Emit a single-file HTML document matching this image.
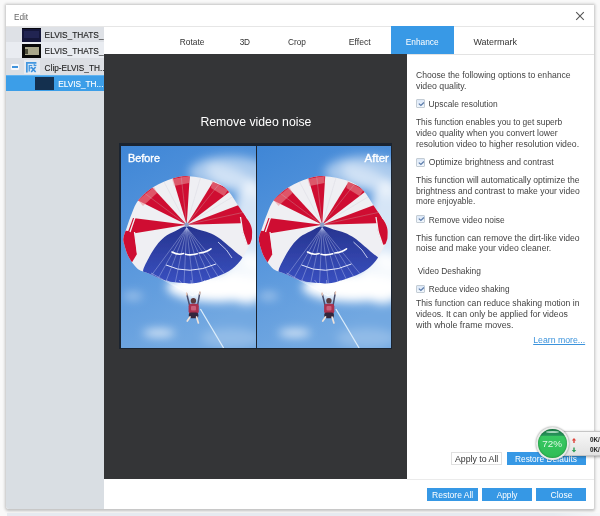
<!DOCTYPE html>
<html><head><meta charset="utf-8"><title>Edit</title>
<style>
*{box-sizing:border-box;margin:0;padding:0}
html,body{width:600px;height:516px;overflow:hidden;background:#f9f9f9;font-family:"Liberation Sans",sans-serif;font-size:8px;color:#333}
.abs{position:absolute}
.t{position:absolute;white-space:nowrap;line-height:12px;height:12px}
#win{left:6px;top:5px;width:588px;height:504px;background:#fff;box-shadow:0 .5px 3px 1px rgba(0,0,0,.23);border-radius:0 0 1px 3px}
#below{left:7px;top:513.4px;width:594px;height:3px;background:linear-gradient(to right,#e6eaf0 0,#e6eaf0 92%,#f6f7f9 100%)}
#tline{left:6px;top:26px;width:588px;height:1px;background:#e6e6e6}
#left{left:6px;top:27px;width:98px;height:482px;background:#d9dee3;border-bottom-left-radius:3px}
#bline{left:407px;top:479px;width:187px;height:1px;background:#ebebeb}
.row{left:6px;width:98px}
#tabs{left:104px;top:27px;width:490px;height:27px;background:#fff}
#tabline{left:104px;top:54px;width:490px;height:1px;background:#e3e3e3}
#entab{left:391px;top:26px;width:63px;height:28px;background:#3899e6}
#dark{left:104px;top:54px;width:303px;height:425px;background:#343537}
#frame{left:119px;top:143.4px;width:273.4px;height:205.6px;background:#1b2430}
.cb{width:8.5px;height:8.5px;border:1px solid #c3ccd4;background:linear-gradient(#dce8f8,#f2f7fc);line-height:0;border-radius:1px}
.cb svg{position:absolute;left:-0.5px;top:-0.5px}
.btn{background:#3698e5}
#clip{left:0;top:0;width:104px;height:516px;overflow:hidden}
#txt{left:0;top:0;width:600px;height:516px;will-change:transform}
</style></head><body>
<div class="abs" id="win"></div>
<div class="abs" id="below"></div>
<div class="abs" id="tline"></div>
<div class="abs" id="left"></div>
<div class="abs row" style="top:27px;height:15px;background:#dee1e6"></div>
<div class="abs row" style="top:42px;height:16.4px;background:#e9ecf1"></div>
<div class="abs row" style="top:58.4px;height:16.6px;background:#dcdfe4"></div>
<div class="abs row" style="top:74.8px;height:16.4px;background:#3c9ee8;border-top:1px solid #62b3ef"></div>
<div class="abs" style="left:21.8px;top:27.7px;width:19px;height:14px;background:#15173a;border-top:1.5px solid #08080f"></div>
<div class="abs" style="left:23.5px;top:31px;width:15px;height:7px;background:#2a2d62;opacity:.6;filter:blur(.7px)"></div>
<div class="abs" style="left:21.8px;top:44px;width:19px;height:14px;background:#090909"></div>
<div class="abs" style="left:24.8px;top:47px;width:14.4px;height:7.5px;background:#aaa88b;filter:blur(.4px)"></div>
<div class="abs" style="left:25.4px;top:48.5px;width:3px;height:5px;background:#4a4a38;filter:blur(.4px)"></div>
<div class="abs" style="left:24.4px;top:60px;width:16px;height:13.5px;background:#e7ebf1"></div>
<div class="abs" style="left:11.3px;top:63.6px;width:7.4px;height:6.8px;background:#f7f9fc;border-radius:1.2px"></div>
<div class="abs" style="left:12.4px;top:66px;width:5.2px;height:1.9px;background:#3f93dc"></div>
<svg class="abs" style="left:26px;top:62px" width="10.6" height="10.8" viewBox="0 0 10.6 10.8"><rect x="0" y="0" width="10.4" height="10.6" fill="#dbe9f7"/><path d="M0 0 H10.4 V1.7 H1.7 V10.6 H0Z" fill="#4397df"/><path d="M2.6 2.9 H6.2 V4.1 H3.9 V5.4 H5.6 V6.5 H3.9 V9.6 H2.6Z" fill="#4397df"/><path d="M5.2 4.9 L9.6 9.9 M9.6 4.9 L5.2 9.9" stroke="#3a8fdb" stroke-width="1.5"/><path d="M8.2 1.7 V3.4 H10.4" stroke="#4397df" stroke-width="1.1" fill="none"/></svg>
<div class="abs" style="left:35.4px;top:76.8px;width:18.6px;height:13.6px;background:#14304f"></div>
<div class="abs" id="tabs"></div>
<div class="abs" id="tabline"></div>
<div class="abs" id="entab"></div>
<div class="abs" id="dark"></div>
<div class="abs" id="bline"></div>
<div class="abs" id="frame"></div>
<svg class="abs" style="left:121px;top:145.5px" width="135.2" height="202" viewBox="0 0 135.2 202">
<defs>
<linearGradient id="skya" x1="0" y1="0" x2="0.35" y2="1"><stop offset="0" stop-color="#3f86d6"/><stop offset="0.5" stop-color="#5796dc"/><stop offset="1" stop-color="#72a8e1"/></linearGradient>
<linearGradient id="blua" x1="0" y1="0" x2="0" y2="1"><stop offset="0" stop-color="#27348f"/><stop offset="1" stop-color="#3a52c4"/></linearGradient>
<filter id="bla" x="-20%" y="-20%" width="140%" height="140%"><feGaussianBlur stdDeviation="5"/></filter>
<filter id="bsa"><feGaussianBlur stdDeviation="0.45"/></filter>
<clipPath id="cpa"><path d="M2.7 90.8 C3.1 88.7 3.6 87.7 5.0 83.8 C6.4 79.9 8.7 72.5 10.8 67.5 C12.9 62.5 14.1 58.0 17.8 53.5 C21.5 49.0 27.3 44.2 33.0 40.7 C38.6 37.2 45.9 34.2 51.7 32.5 C57.5 30.8 61.4 29.8 68.0 30.2 C74.6 30.6 84.9 32.5 91.3 34.8 C97.7 37.1 101.8 39.5 106.5 44.2 C111.2 48.9 115.4 57.0 119.3 62.8 C123.2 68.6 127.9 74.5 129.8 79.2 C131.8 83.9 131.0 88.0 131.0 90.8 C131.0 93.6 130.4 94.3 129.8 96.0 C129.2 97.7 129.2 97.7 127.5 100.8 C125.8 103.9 122.6 110.7 119.3 114.8 C116.0 118.9 112.4 122.4 107.7 125.3 C103.0 128.2 96.8 130.4 91.3 132.3 C85.8 134.2 79.8 136.2 75.0 137.0 C70.2 137.8 67.2 137.4 62.2 137.0 C57.2 136.6 50.4 136.2 44.7 134.7 C39.1 133.1 32.2 129.3 28.3 127.7 C24.4 126.1 23.4 126.3 21.3 125.3 C19.2 124.3 17.8 124.3 15.5 121.8 C13.2 119.3 9.4 114.5 7.3 110.2 C5.2 105.9 3.5 99.4 2.7 96.2 C1.9 93.0 2.3 92.9 2.7 90.8Z"/></clipPath>
<clipPath id="fra"><rect x="0" y="0" width="136" height="202"/></clipPath>
</defs>
<g clip-path="url(#fra)">
<rect x="0" y="0" width="136" height="202" fill="url(#skya)"/>
<g filter="url(#bla)" fill="#fff">
<ellipse cx="108" cy="26" rx="40" ry="16" opacity="0.5"/>
<ellipse cx="112" cy="34" rx="30" ry="11" opacity="0.45" transform="rotate(28 112 34)"/>
<ellipse cx="132" cy="80" rx="20" ry="46" opacity="0.75"/>
<ellipse cx="96" cy="141" rx="50" ry="15" opacity="1"/>
<ellipse cx="106" cy="140" rx="38" ry="11" opacity="1"/>
<ellipse cx="126" cy="132" rx="24" ry="26" opacity="0.9"/>
<ellipse cx="38" cy="187" rx="16" ry="4" opacity="0.75"/>
<ellipse cx="110" cy="192" rx="30" ry="10" opacity="0.22"/>
<ellipse cx="12" cy="150" rx="10" ry="4" opacity="0.4"/>
</g>
<g filter="url(#bsa)">
<path d="M2.7 90.8 C3.1 88.7 3.6 87.7 5.0 83.8 C6.4 79.9 8.7 72.5 10.8 67.5 C12.9 62.5 14.1 58.0 17.8 53.5 C21.5 49.0 27.3 44.2 33.0 40.7 C38.6 37.2 45.9 34.2 51.7 32.5 C57.5 30.8 61.4 29.8 68.0 30.2 C74.6 30.6 84.9 32.5 91.3 34.8 C97.7 37.1 101.8 39.5 106.5 44.2 C111.2 48.9 115.4 57.0 119.3 62.8 C123.2 68.6 127.9 74.5 129.8 79.2 C131.8 83.9 131.0 88.0 131.0 90.8 C131.0 93.6 130.4 94.3 129.8 96.0 C129.2 97.7 129.2 97.7 127.5 100.8 C125.8 103.9 122.6 110.7 119.3 114.8 C116.0 118.9 112.4 122.4 107.7 125.3 C103.0 128.2 96.8 130.4 91.3 132.3 C85.8 134.2 79.8 136.2 75.0 137.0 C70.2 137.8 67.2 137.4 62.2 137.0 C57.2 136.6 50.4 136.2 44.7 134.7 C39.1 133.1 32.2 129.3 28.3 127.7 C24.4 126.1 23.4 126.3 21.3 125.3 C19.2 124.3 17.8 124.3 15.5 121.8 C13.2 119.3 9.4 114.5 7.3 110.2 C5.2 105.9 3.5 99.4 2.7 96.2 C1.9 93.0 2.3 92.9 2.7 90.8Z" fill="#efeff3"/>
<g clip-path="url(#cpa)">
<path d="M65.7 78.7 L12.0 72.0 L6.0 88.5 Z" fill="#cf1030"/>
<path d="M65.7 78.7 L12.0 52.0 L30.0 40.0 Z" fill="#cf1030"/>
<path d="M65.7 78.7 L50.5 28.0 L69.0 26.0 Z" fill="#cf1030"/>
<path d="M65.7 78.7 L92.0 36.0 L111.0 44.0 Z" fill="#cf1030"/>
<path d="M65.7 78.7 L119.0 58.5 L128.0 77.0 Z" fill="#cf1030"/>
<path d="M0 84 L13.5 86 L16 108 L10 118 L0 110Z" fill="#cf1030"/>
<path d="M120 71 L134 76 L134 97 L126 99 L121.5 86Z" fill="#cf1030"/>
<path d="M14.5 70 L9 86 M16.5 108 L13.5 86 M119.5 71 L121.8 86 L126.5 100" stroke="#efeff3" stroke-width="1.3" fill="none"/>
<path d="M17 54 L33 41 L36 47 L22 60Z" fill="#ec8e96" opacity="0.55"/>
<path d="M51 33 L68 30 L68 37 L53 40Z" fill="#e9a0a6" opacity="0.5"/>
<path d="M91 35 L107 44 L103 50 L90 42Z" fill="#ec9aa0" opacity="0.5"/>
<path d="M65.7 78.7 L22 46" stroke="#c9c9d6" stroke-width="0.4" opacity="0.7"/>
<path d="M65.7 78.7 L42 34" stroke="#c9c9d6" stroke-width="0.4" opacity="0.7"/>
<path d="M65.7 78.7 L60 29" stroke="#c9c9d6" stroke-width="0.4" opacity="0.7"/>
<path d="M65.7 78.7 L80 30" stroke="#c9c9d6" stroke-width="0.4" opacity="0.7"/>
<path d="M65.7 78.7 L99 37" stroke="#c9c9d6" stroke-width="0.4" opacity="0.7"/>
<path d="M65.7 78.7 L113 50" stroke="#c9c9d6" stroke-width="0.4" opacity="0.7"/>
<path d="M65.7 78.7 L124 66" stroke="#c9c9d6" stroke-width="0.4" opacity="0.7"/>
<path d="M65.7 80.0 C61.9 80.3 57.7 83.5 54.0 85.3 C50.3 87.1 46.6 88.6 43.5 91.0 C40.4 93.4 38.0 96.2 35.5 99.5 C33.0 102.8 30.7 106.3 28.5 110.5 C26.3 114.7 22.7 121.2 22.1 124.5 C21.5 127.8 21.2 127.6 25.0 130.0 C28.8 132.4 38.3 137.0 45.0 139.0 C51.7 141.0 58.3 141.8 65.0 142.0 C71.7 142.2 78.3 141.5 85.0 140.0 C91.7 138.5 99.3 135.5 105.0 133.0 C110.7 130.5 115.9 128.1 119.0 125.0 C122.1 121.9 124.3 117.8 123.5 114.5 C122.7 111.2 116.9 108.2 114.0 105.5 C111.1 102.8 108.7 100.8 106.0 98.5 C103.3 96.2 101.0 94.0 98.0 92.0 C95.0 90.0 91.5 88.2 88.0 86.8 C84.5 85.4 80.7 84.7 77.0 83.6 C73.3 82.5 69.5 79.7 65.7 80.0Z" fill="url(#blua)"/>
<path d="M65.7 81.7 L24 138" stroke="#c9d2f4" stroke-width="0.5" opacity="0.75"/>
<path d="M65.7 81.7 L34 138" stroke="#c9d2f4" stroke-width="0.5" opacity="0.75"/>
<path d="M65.7 81.7 L44 138" stroke="#c9d2f4" stroke-width="0.5" opacity="0.75"/>
<path d="M65.7 81.7 L54 138" stroke="#c9d2f4" stroke-width="0.5" opacity="0.75"/>
<path d="M65.7 81.7 L63 138" stroke="#c9d2f4" stroke-width="0.5" opacity="0.75"/>
<path d="M65.7 81.7 L72 138" stroke="#c9d2f4" stroke-width="0.5" opacity="0.75"/>
<path d="M65.7 81.7 L82 138" stroke="#c9d2f4" stroke-width="0.5" opacity="0.75"/>
<path d="M65.7 81.7 L92 138" stroke="#c9d2f4" stroke-width="0.5" opacity="0.75"/>
<path d="M65.7 81.7 L102 138" stroke="#c9d2f4" stroke-width="0.5" opacity="0.75"/>
<path d="M65.7 81.7 L112 138" stroke="#c9d2f4" stroke-width="0.5" opacity="0.75"/>
<path d="M51 106 Q57 109.5 62.6 107.5 M64.6 108.3 Q70 109.6 76.3 107.7 M78.3 107 Q85 106.5 90 102.8" stroke="#fff" stroke-width="1.6" fill="none" stroke-linecap="round"/>
<path d="M45 119 Q68 130 95 118" stroke="#e6eafc" stroke-width="1" fill="none"/>
<path d="M97 96 Q107 104 111 112" stroke="#e6eafc" stroke-width="0.8" fill="none"/>
</g>
<circle cx="65.7" cy="78.7" r="2.3" fill="#8fa0c8"/>
<path d="M30 127 L71.5 150" stroke="#fff" stroke-width="0.45" opacity="0.8"/>
<path d="M45 134 L71.5 150" stroke="#fff" stroke-width="0.45" opacity="0.8"/>
<path d="M58 134 L71.5 150" stroke="#fff" stroke-width="0.45" opacity="0.8"/>
<path d="M70 134 L71.5 150" stroke="#fff" stroke-width="0.45" opacity="0.8"/>
<path d="M84 134 L71.5 150" stroke="#fff" stroke-width="0.45" opacity="0.8"/>
<path d="M98 134 L71.5 150" stroke="#fff" stroke-width="0.45" opacity="0.8"/>
<path d="M110 127 L71.5 150" stroke="#fff" stroke-width="0.45" opacity="0.8"/>
<path d="M79.4 163 L102.6 202" stroke="#dcedfb" stroke-width="1.25"/>
<path d="M68.6 159.5 L65.8 148 M76.6 159.5 L78.8 146.6" stroke="#4a4f6e" stroke-width="1.5" stroke-linecap="round"/>
<path d="M65.8 149 L65.6 147 M78.7 148 L79 146" stroke="#e8c8b8" stroke-width="1.5" stroke-linecap="round"/>
<ellipse cx="72.4" cy="154.8" rx="2.7" ry="2.8" fill="#5a3a3c"/>
<rect x="67.6" y="157.8" width="10.2" height="10" rx="2.4" fill="#a9304f"/>
<rect x="70" y="160" width="5" height="4.5" rx="1" fill="#d06a86" opacity=".8"/>
<rect x="67.8" y="166.6" width="9.6" height="5.6" rx="2.2" fill="#33283c"/>
<path d="M69 171 L66.3 175 M75.6 171 L77.4 177" stroke="#efe2da" stroke-width="1.7" stroke-linecap="round"/>
</g>
</g>
</svg>
<svg class="abs" style="left:257px;top:145.5px" width="134.3" height="202" viewBox="0.5 0 134.3 202">
<defs>
<linearGradient id="skyb" x1="0" y1="0" x2="0.35" y2="1"><stop offset="0" stop-color="#3f86d6"/><stop offset="0.5" stop-color="#5796dc"/><stop offset="1" stop-color="#72a8e1"/></linearGradient>
<linearGradient id="blub" x1="0" y1="0" x2="0" y2="1"><stop offset="0" stop-color="#27348f"/><stop offset="1" stop-color="#3a52c4"/></linearGradient>
<filter id="blb" x="-20%" y="-20%" width="140%" height="140%"><feGaussianBlur stdDeviation="5"/></filter>
<filter id="bsb"><feGaussianBlur stdDeviation="0.45"/></filter>
<clipPath id="cpb"><path d="M2.7 90.8 C3.1 88.7 3.6 87.7 5.0 83.8 C6.4 79.9 8.7 72.5 10.8 67.5 C12.9 62.5 14.1 58.0 17.8 53.5 C21.5 49.0 27.3 44.2 33.0 40.7 C38.6 37.2 45.9 34.2 51.7 32.5 C57.5 30.8 61.4 29.8 68.0 30.2 C74.6 30.6 84.9 32.5 91.3 34.8 C97.7 37.1 101.8 39.5 106.5 44.2 C111.2 48.9 115.4 57.0 119.3 62.8 C123.2 68.6 127.9 74.5 129.8 79.2 C131.8 83.9 131.0 88.0 131.0 90.8 C131.0 93.6 130.4 94.3 129.8 96.0 C129.2 97.7 129.2 97.7 127.5 100.8 C125.8 103.9 122.6 110.7 119.3 114.8 C116.0 118.9 112.4 122.4 107.7 125.3 C103.0 128.2 96.8 130.4 91.3 132.3 C85.8 134.2 79.8 136.2 75.0 137.0 C70.2 137.8 67.2 137.4 62.2 137.0 C57.2 136.6 50.4 136.2 44.7 134.7 C39.1 133.1 32.2 129.3 28.3 127.7 C24.4 126.1 23.4 126.3 21.3 125.3 C19.2 124.3 17.8 124.3 15.5 121.8 C13.2 119.3 9.4 114.5 7.3 110.2 C5.2 105.9 3.5 99.4 2.7 96.2 C1.9 93.0 2.3 92.9 2.7 90.8Z"/></clipPath>
<clipPath id="frb"><rect x="0" y="0" width="136" height="202"/></clipPath>
</defs>
<g clip-path="url(#frb)">
<rect x="0" y="0" width="136" height="202" fill="url(#skyb)"/>
<g filter="url(#blb)" fill="#fff">
<ellipse cx="108" cy="26" rx="40" ry="16" opacity="0.5"/>
<ellipse cx="112" cy="34" rx="30" ry="11" opacity="0.45" transform="rotate(28 112 34)"/>
<ellipse cx="132" cy="80" rx="20" ry="46" opacity="0.75"/>
<ellipse cx="96" cy="141" rx="50" ry="15" opacity="1"/>
<ellipse cx="106" cy="140" rx="38" ry="11" opacity="1"/>
<ellipse cx="126" cy="132" rx="24" ry="26" opacity="0.9"/>
<ellipse cx="38" cy="187" rx="16" ry="4" opacity="0.75"/>
<ellipse cx="110" cy="192" rx="30" ry="10" opacity="0.22"/>
<ellipse cx="12" cy="150" rx="10" ry="4" opacity="0.4"/>
</g>
<g filter="url(#bsb)">
<path d="M2.7 90.8 C3.1 88.7 3.6 87.7 5.0 83.8 C6.4 79.9 8.7 72.5 10.8 67.5 C12.9 62.5 14.1 58.0 17.8 53.5 C21.5 49.0 27.3 44.2 33.0 40.7 C38.6 37.2 45.9 34.2 51.7 32.5 C57.5 30.8 61.4 29.8 68.0 30.2 C74.6 30.6 84.9 32.5 91.3 34.8 C97.7 37.1 101.8 39.5 106.5 44.2 C111.2 48.9 115.4 57.0 119.3 62.8 C123.2 68.6 127.9 74.5 129.8 79.2 C131.8 83.9 131.0 88.0 131.0 90.8 C131.0 93.6 130.4 94.3 129.8 96.0 C129.2 97.7 129.2 97.7 127.5 100.8 C125.8 103.9 122.6 110.7 119.3 114.8 C116.0 118.9 112.4 122.4 107.7 125.3 C103.0 128.2 96.8 130.4 91.3 132.3 C85.8 134.2 79.8 136.2 75.0 137.0 C70.2 137.8 67.2 137.4 62.2 137.0 C57.2 136.6 50.4 136.2 44.7 134.7 C39.1 133.1 32.2 129.3 28.3 127.7 C24.4 126.1 23.4 126.3 21.3 125.3 C19.2 124.3 17.8 124.3 15.5 121.8 C13.2 119.3 9.4 114.5 7.3 110.2 C5.2 105.9 3.5 99.4 2.7 96.2 C1.9 93.0 2.3 92.9 2.7 90.8Z" fill="#efeff3"/>
<g clip-path="url(#cpb)">
<path d="M65.7 78.7 L12.0 72.0 L6.0 88.5 Z" fill="#cf1030"/>
<path d="M65.7 78.7 L12.0 52.0 L30.0 40.0 Z" fill="#cf1030"/>
<path d="M65.7 78.7 L50.5 28.0 L69.0 26.0 Z" fill="#cf1030"/>
<path d="M65.7 78.7 L92.0 36.0 L111.0 44.0 Z" fill="#cf1030"/>
<path d="M65.7 78.7 L119.0 58.5 L128.0 77.0 Z" fill="#cf1030"/>
<path d="M0 84 L13.5 86 L16 108 L10 118 L0 110Z" fill="#cf1030"/>
<path d="M120 71 L134 76 L134 97 L126 99 L121.5 86Z" fill="#cf1030"/>
<path d="M14.5 70 L9 86 M16.5 108 L13.5 86 M119.5 71 L121.8 86 L126.5 100" stroke="#efeff3" stroke-width="1.3" fill="none"/>
<path d="M17 54 L33 41 L36 47 L22 60Z" fill="#ec8e96" opacity="0.55"/>
<path d="M51 33 L68 30 L68 37 L53 40Z" fill="#e9a0a6" opacity="0.5"/>
<path d="M91 35 L107 44 L103 50 L90 42Z" fill="#ec9aa0" opacity="0.5"/>
<path d="M65.7 78.7 L22 46" stroke="#c9c9d6" stroke-width="0.4" opacity="0.7"/>
<path d="M65.7 78.7 L42 34" stroke="#c9c9d6" stroke-width="0.4" opacity="0.7"/>
<path d="M65.7 78.7 L60 29" stroke="#c9c9d6" stroke-width="0.4" opacity="0.7"/>
<path d="M65.7 78.7 L80 30" stroke="#c9c9d6" stroke-width="0.4" opacity="0.7"/>
<path d="M65.7 78.7 L99 37" stroke="#c9c9d6" stroke-width="0.4" opacity="0.7"/>
<path d="M65.7 78.7 L113 50" stroke="#c9c9d6" stroke-width="0.4" opacity="0.7"/>
<path d="M65.7 78.7 L124 66" stroke="#c9c9d6" stroke-width="0.4" opacity="0.7"/>
<path d="M65.7 80.0 C61.9 80.3 57.7 83.5 54.0 85.3 C50.3 87.1 46.6 88.6 43.5 91.0 C40.4 93.4 38.0 96.2 35.5 99.5 C33.0 102.8 30.7 106.3 28.5 110.5 C26.3 114.7 22.7 121.2 22.1 124.5 C21.5 127.8 21.2 127.6 25.0 130.0 C28.8 132.4 38.3 137.0 45.0 139.0 C51.7 141.0 58.3 141.8 65.0 142.0 C71.7 142.2 78.3 141.5 85.0 140.0 C91.7 138.5 99.3 135.5 105.0 133.0 C110.7 130.5 115.9 128.1 119.0 125.0 C122.1 121.9 124.3 117.8 123.5 114.5 C122.7 111.2 116.9 108.2 114.0 105.5 C111.1 102.8 108.7 100.8 106.0 98.5 C103.3 96.2 101.0 94.0 98.0 92.0 C95.0 90.0 91.5 88.2 88.0 86.8 C84.5 85.4 80.7 84.7 77.0 83.6 C73.3 82.5 69.5 79.7 65.7 80.0Z" fill="url(#blub)"/>
<path d="M65.7 81.7 L24 138" stroke="#c9d2f4" stroke-width="0.5" opacity="0.75"/>
<path d="M65.7 81.7 L34 138" stroke="#c9d2f4" stroke-width="0.5" opacity="0.75"/>
<path d="M65.7 81.7 L44 138" stroke="#c9d2f4" stroke-width="0.5" opacity="0.75"/>
<path d="M65.7 81.7 L54 138" stroke="#c9d2f4" stroke-width="0.5" opacity="0.75"/>
<path d="M65.7 81.7 L63 138" stroke="#c9d2f4" stroke-width="0.5" opacity="0.75"/>
<path d="M65.7 81.7 L72 138" stroke="#c9d2f4" stroke-width="0.5" opacity="0.75"/>
<path d="M65.7 81.7 L82 138" stroke="#c9d2f4" stroke-width="0.5" opacity="0.75"/>
<path d="M65.7 81.7 L92 138" stroke="#c9d2f4" stroke-width="0.5" opacity="0.75"/>
<path d="M65.7 81.7 L102 138" stroke="#c9d2f4" stroke-width="0.5" opacity="0.75"/>
<path d="M65.7 81.7 L112 138" stroke="#c9d2f4" stroke-width="0.5" opacity="0.75"/>
<path d="M51 106 Q57 109.5 62.6 107.5 M64.6 108.3 Q70 109.6 76.3 107.7 M78.3 107 Q85 106.5 90 102.8" stroke="#fff" stroke-width="1.6" fill="none" stroke-linecap="round"/>
<path d="M45 119 Q68 130 95 118" stroke="#e6eafc" stroke-width="1" fill="none"/>
<path d="M97 96 Q107 104 111 112" stroke="#e6eafc" stroke-width="0.8" fill="none"/>
</g>
<circle cx="65.7" cy="78.7" r="2.3" fill="#8fa0c8"/>
<path d="M30 127 L71.5 150" stroke="#fff" stroke-width="0.45" opacity="0.8"/>
<path d="M45 134 L71.5 150" stroke="#fff" stroke-width="0.45" opacity="0.8"/>
<path d="M58 134 L71.5 150" stroke="#fff" stroke-width="0.45" opacity="0.8"/>
<path d="M70 134 L71.5 150" stroke="#fff" stroke-width="0.45" opacity="0.8"/>
<path d="M84 134 L71.5 150" stroke="#fff" stroke-width="0.45" opacity="0.8"/>
<path d="M98 134 L71.5 150" stroke="#fff" stroke-width="0.45" opacity="0.8"/>
<path d="M110 127 L71.5 150" stroke="#fff" stroke-width="0.45" opacity="0.8"/>
<path d="M79.4 163 L102.6 202" stroke="#dcedfb" stroke-width="1.25"/>
<path d="M68.6 159.5 L65.8 148 M76.6 159.5 L78.8 146.6" stroke="#4a4f6e" stroke-width="1.5" stroke-linecap="round"/>
<path d="M65.8 149 L65.6 147 M78.7 148 L79 146" stroke="#e8c8b8" stroke-width="1.5" stroke-linecap="round"/>
<ellipse cx="72.4" cy="154.8" rx="2.7" ry="2.8" fill="#5a3a3c"/>
<rect x="67.6" y="157.8" width="10.2" height="10" rx="2.4" fill="#a9304f"/>
<rect x="70" y="160" width="5" height="4.5" rx="1" fill="#d06a86" opacity=".8"/>
<rect x="67.8" y="166.6" width="9.6" height="5.6" rx="2.2" fill="#33283c"/>
<path d="M69 171 L66.3 175 M75.6 171 L77.4 177" stroke="#efe2da" stroke-width="1.7" stroke-linecap="round"/>
</g>
</g>
</svg>
<div class="abs cb" style="left:416.2px;top:99.0px"><svg width="8" height="8" viewBox="0 0 8 8"><path d="M1.8 3.6 L3.9 5.5 L6.9 2.5" stroke="#5b7cab" stroke-width="1.25" fill="none"/></svg></div>
<div class="abs cb" style="left:416.2px;top:158.0px"><svg width="8" height="8" viewBox="0 0 8 8"><path d="M1.8 3.6 L3.9 5.5 L6.9 2.5" stroke="#5b7cab" stroke-width="1.25" fill="none"/></svg></div>
<div class="abs cb" style="left:416.2px;top:214.8px"><svg width="8" height="8" viewBox="0 0 8 8"><path d="M1.8 3.6 L3.9 5.5 L6.9 2.5" stroke="#5b7cab" stroke-width="1.25" fill="none"/></svg></div>
<div class="abs cb" style="left:416.2px;top:284.6px"><svg width="8" height="8" viewBox="0 0 8 8"><path d="M1.8 3.6 L3.9 5.5 L6.9 2.5" stroke="#5b7cab" stroke-width="1.25" fill="none"/></svg></div>
<svg class="abs" style="left:575px;top:11px" width="10" height="10" viewBox="0 0 10 10"><path d="M1.2 1.2 L8.8 8.8 M8.8 1.2 L1.2 8.8" stroke="#555" stroke-width="1.1" fill="none"/></svg>
<div class="abs" style="left:451px;top:451.5px;width:51px;height:13.5px;background:#fff;border:1px solid #e0e0e0"></div>
<div class="abs btn" style="left:507px;top:451.5px;width:79px;height:13.5px"></div>
<div class="abs btn" style="left:427px;top:488px;width:51px;height:13px"></div>
<div class="abs btn" style="left:482px;top:488px;width:50px;height:13px"></div>
<div class="abs btn" style="left:536px;top:488px;width:50px;height:13px"></div>
<div class="abs" id="txt">
<div class="abs" id="clip">
<span class="t" style="left:44.6px;top:29px;font-size:8.34px;color:#1c1c1c;-webkit-text-stroke:.12px #1c1c1c">ELVIS_THATS_</span>
<span class="t" style="left:44.6px;top:45px;font-size:8.34px;color:#1c1c1c;-webkit-text-stroke:.12px #1c1c1c">ELVIS_THATS_</span>
<span class="t" style="left:44.6px;top:63px;font-size:8.25px;color:#1c1c1c;-webkit-text-stroke:.12px #1c1c1c">Clip-ELVIS_TH...</span>
<span class="t" style="left:58.2px;top:79px;font-size:8.26px;color:#ffffff;-webkit-text-stroke:.12px #ffffff">ELVIS_TH...</span>
</div>
<span class="t" style="left:14.0px;top:12px;font-size:8.25px;color:#666;letter-spacing:-0.055px">Edit</span>
<span class="t" style="left:179.8px;top:36px;font-size:8.35px;color:#333">Rotate</span>
<span class="t" style="left:239.7px;top:37px;font-size:8.25px;color:#333;letter-spacing:-0.275px">3D</span>
<span class="t" style="left:288.0px;top:36px;font-size:8.30px;color:#333">Crop</span>
<span class="t" style="left:348.8px;top:36px;font-size:8.66px;color:#333">Effect</span>
<span class="t" style="left:405.7px;top:36px;font-size:8.36px;color:#fff">Enhance</span>
<span class="t" style="left:473.5px;top:36px;font-size:8.96px;color:#333">Watermark</span>
<span class="t" style="left:200.4px;top:116px;font-size:12.26px;color:#fff">Remove video noise</span>
<span class="t" style="left:128.0px;top:152px;font-size:10.86px;color:#fff;-webkit-text-stroke:.35px #fff">Before</span>
<span class="t" style="left:364.6px;top:152px;font-size:11.50px;color:#fff;-webkit-text-stroke:.35px #fff">After</span>
<span class="t" style="left:416.0px;top:69px;font-size:8.58px;color:#444">Choose the following options to enhance</span>
<span class="t" style="left:416.0px;top:80px;font-size:8.76px;color:#444">video quality.</span>
<span class="t" style="left:428.5px;top:98px;font-size:8.42px;color:#444">Upscale resolution</span>
<span class="t" style="left:416.0px;top:116px;font-size:8.39px;color:#444">This function enables you to get superb</span>
<span class="t" style="left:416.0px;top:127px;font-size:8.69px;color:#444">video quality when you convert lower</span>
<span class="t" style="left:416.0px;top:138px;font-size:8.71px;color:#444">resolution video to higher resolution video.</span>
<span class="t" style="left:428.8px;top:156px;font-size:8.55px;color:#444">Optimize brightness and contrast</span>
<span class="t" style="left:416.0px;top:174px;font-size:8.55px;color:#444">This function will automatically optimize the</span>
<span class="t" style="left:416.0px;top:185px;font-size:8.57px;color:#444">brightness and contrast to make your video</span>
<span class="t" style="left:416.0px;top:195px;font-size:8.33px;color:#444">more enjoyable.</span>
<span class="t" style="left:428.8px;top:214px;font-size:8.38px;color:#444">Remove video noise</span>
<span class="t" style="left:416.0px;top:232px;font-size:8.62px;color:#444">This function can remove the dirt-like video</span>
<span class="t" style="left:416.0px;top:242px;font-size:8.60px;color:#444">noise and make your video cleaner.</span>
<span class="t" style="left:417.7px;top:265px;font-size:8.39px;color:#444">Video Deshaking</span>
<span class="t" style="left:428.8px;top:284px;font-size:8.25px;color:#444;letter-spacing:-0.024px">Reduce video shaking</span>
<span class="t" style="left:416.0px;top:297px;font-size:8.65px;color:#444">This function can reduce shaking motion in</span>
<span class="t" style="left:416.0px;top:308px;font-size:8.68px;color:#444">videos. It can only be applied for videos</span>
<span class="t" style="left:416.0px;top:319px;font-size:8.87px;color:#444">with whole frame moves.</span>
<span class="t" style="left:533.2px;top:334px;font-size:8.74px;color:#3b93dc;text-decoration:underline">Learn more...</span>
<span class="t" style="left:455.0px;top:453px;font-size:8.75px;color:#333">Apply to All</span>
<span class="t" style="left:515.0px;top:453px;font-size:8.32px;color:#fff">Restore Defaults</span>
<span class="t" style="left:432.0px;top:489px;font-size:8.54px;color:#fff">Restore All</span>
<span class="t" style="left:496.7px;top:489px;font-size:8.31px;color:#fff">Apply</span>
<span class="t" style="left:550.5px;top:489px;font-size:8.60px;color:#fff">Close</span>
<div class="abs" style="left:550px;top:431.3px;width:70px;height:25.2px;border:1px solid #c6c6c6;border-radius:4px;background:linear-gradient(#f7f7f7,#e2e2e2);box-shadow:0 1px 3px rgba(0,0,0,.35)"></div>
<div class="abs" style="left:536.2px;top:427.2px;width:33px;height:33px;border-radius:50%;background:#e9ece9;box-shadow:0 0 2px rgba(0,0,0,.5)"></div>
<div class="abs" style="left:538px;top:429px;width:29.4px;height:29.4px;border-radius:50%;background:linear-gradient(to bottom,#1b7f49 0,#27935a 22%,#38c862 24%,#2fbd55 100%);box-shadow:inset 0 0 2px rgba(0,60,20,.6)"></div>
<div class="abs" style="left:546px;top:430.5px;width:13px;height:2.2px;border-radius:50%;background:#cfeedd;opacity:.75;filter:blur(.6px)"></div>
<span class="t" style="left:542.3px;top:437.6px;font-size:9.9px;color:#dff7e5">72%</span>
<svg class="abs" style="left:570.5px;top:436.5px" width="6" height="16" viewBox="0 0 6 16"><path d="M3 1 L5.2 3.4 H3.7 V6 H2.3 V3.4 H.8Z" fill="#e0423a"/><path d="M3 15.4 L5.2 13 H3.7 V10.6 H2.3 V13 H.8Z" fill="#2f9e57"/></svg>
<span class="t" style="left:590px;top:433.8px;font-size:6.3px;font-weight:bold;color:#1a1a1a">0K/s</span>
<span class="t" style="left:590px;top:443.9px;font-size:6.3px;font-weight:bold;color:#1a1a1a">0K/s</span>

</div>
</body></html>
